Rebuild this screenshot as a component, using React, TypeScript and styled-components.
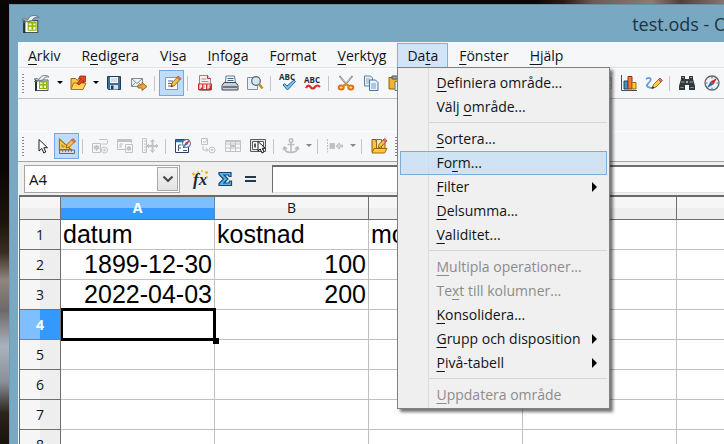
import React from "react";
import styled, { createGlobalStyle, css } from "styled-components";

const ui = '"Open Sans", "Noto Sans", sans-serif';

const GlobalStyle = createGlobalStyle`
  *, *::before, *::after { box-sizing: border-box; }
  body { margin: 0; font-family: ${ui}; font-size: 14px; color: #101418; }
  button, input { font: inherit; color: inherit; }
`;

const Desktop = styled.div`
  display: flex;
  height: 100vh;
  padding: 4px 0 0 9px;
  overflow: hidden;
  background:
    linear-gradient(to right, #0a0706 0 74%, #2a1c17 78%, #6b5c55 82%, #8b7b73 90%, #4d423d 94%, #84766e 100%) top / 100% 4px no-repeat,
    linear-gradient(to bottom, #080504 0 38%, #1c150c 50%, #3b2f25 57%, #8f857d 63%, #6d6a6a 70%, #a9b3bf 78%, #8a8f98 86%, #2a241c 93%, #17120c 100%);
`;

const Frame = styled.div`
  flex: 1;
  min-width: 0;
  display: flex;
  flex-direction: column;
  padding-left: 8px;
  background: #78a8c2;
  border-top: 1px solid #6692aa;
  border-left: 1px solid #6e9db6;
`;

const TitleBar = styled.header`
  display: flex;
  align-items: center;
  height: 37px;
  padding: 0 0 0 4px;
  overflow: hidden;
`;

const Title = styled.h1`
  margin: 0 -4px 0 auto;
  font-size: 18px;
  font-weight: 400;
  line-height: 24px;
  white-space: nowrap;
  color: #1f343f;
`;

const Client = styled.main`
  flex: 1;
  min-height: 0;
  display: flex;
  flex-direction: column;
  background: #f5f6f8;
`;

const MenuBar = styled.nav`
  display: flex;
  gap: 1px;
  height: 26px;
  padding-top: 1px;
  background: #f6f7f9;
  border-bottom: 1px solid #e2e3e5;
`;

const MenuHolder = styled.div`
  position: relative;
  display: flex;
`;

const MenuTitle = styled.button<{ $open?: boolean }>`
  display: block;
  height: 25px;
  padding: 0 9px;
  border: 1px solid transparent;
  background: none;
  line-height: 23px;
  white-space: nowrap;
  ${p => p.$open && css`background: #d2e5f8; border-color: #7fb0de;`}
`;

const Key = styled.u`
  text-decoration-thickness: 1px;
  text-underline-offset: 3px;
  text-decoration-skip-ink: none;
`;

const Popup = styled.div`
  position: absolute;
  z-index: 2;
  top: 24px;
  left: 0;
  min-width: 213px;
  padding: 3px 2px 1px;
  border: 1px solid #808080;
  background: linear-gradient(to right, #efefef 30px, #dcdcdc 30px 31px, #f0f0f0 31px);
  box-shadow: 3px 3px 3px rgba(0, 0, 0, 0.55);
`;

const PopupItem = styled.button<{ $active?: boolean }>`
  display: flex;
  align-items: center;
  justify-content: space-between;
  width: 100%;
  height: 24px;
  padding: 0 9px 0 35px;
  border: 1px solid transparent;
  background: none;
  line-height: 22px;
  text-align: left;
  white-space: nowrap;
  &:disabled { color: #8c8c8c; }
  ${p => p.$active && css`background: rgba(190, 219, 246, 0.65); border-color: #7fabdb;`}
`;

const PopupRule = styled.hr`
  height: 1px;
  margin: 3px 0 4px 29px;
  border: 0;
  background: #d5d5d5;
`;

const Submenu = styled.span`
  border: 5px solid transparent;
  border-left-color: #000;
  border-right-width: 0;
`;

const ToolBar = styled.div`
  display: flex;
  align-items: center;
  height: 31px;
  overflow: hidden;
  background: linear-gradient(#fdfdfe 0 1px, #f6f7f9 1px);
  border-bottom: 1px solid #bfc1c4;
`;

const FormBar = styled(ToolBar)`
  margin-top: 32px;
  border-color: #a3a3a3;
`;

const Grip = styled.span`
  flex: none;
  width: 2px;
  height: 19px;
  margin: 0 5px 0 4px;
  background: repeating-linear-gradient(#85878a 0 1px, transparent 1px 3px);
`;

const Tool = styled.button<{ $on?: boolean }>`
  flex: none;
  display: grid;
  place-items: center;
  width: 25px;
  height: 26px;
  padding: 0;
  border: 1px solid transparent;
  background: none;
  ${p => p.$on && css`background: #bfdcfa; border-color: #73a9e0;`}
`;

const More = styled.button<{ $off?: boolean }>`
  flex: none;
  display: grid;
  place-items: center;
  width: 11px;
  height: 26px;
  padding: 0 0 2px;
  border: 0;
  background: none;
  &::before {
    content: "";
    border: 3px solid transparent;
    border-top-color: ${p => (p.$off ? "#85878a" : "#000")};
    border-bottom-width: 0;
  }
`;

const Divider = styled.span`
  flex: none;
  width: 1px;
  height: 15px;
  margin: 0 4px 0 3px;
  background: #c3c5c8;
`;

const FormulaBar = styled.div`
  display: flex;
  align-items: center;
  height: 33px;
  padding-left: 6px;
  background: #f0f0f0;
`;

const NameBox = styled.div`
  flex: none;
  display: flex;
  width: 156px;
  height: 28px;
  margin-right: 7px;
  padding: 1px;
  border: 1px solid #a5a5a5;
  background: #fff;
`;

const NameInput = styled.input`
  flex: 1;
  min-width: 0;
  padding: 0 3px;
  border: 0;
  outline: 0;
  background: none;
  font-size: 15px;
  line-height: 20px;
`;

const NameButton = styled.button`
  display: grid;
  place-items: center;
  width: 21px;
  padding: 0;
  border: 1px solid #a9a9a9;
  background: linear-gradient(#f3f3f3, #e4e4e4);
`;

const FormulaInput = styled.input`
  flex: 1;
  min-width: 0;
  height: 28px;
  margin-left: 10px;
  border: 1px solid #e3e3e3;
  border-top: 2px solid #6d6d6d;
  border-left: 1px solid #6d6d6d;
  border-right: 0;
  outline: 0;
  background: #fff;
`;

const Sheet = styled.div`
  flex: 1;
  min-height: 0;
  margin-left: 1px;
  overflow: hidden;
  border-top: 2px solid #6a6a6a;
  border-left: 1px solid #6a6a6a;
  background: #fff;
`;

const Grid = styled.table`
  width: 811px;
  table-layout: fixed;
  border-collapse: separate;
  border-spacing: 0;
`;

const HeadCol = styled.col`width: 41px;`;
const DataCol = styled.col`width: 154px;`;

const ColHead = styled.th<{ $on?: boolean }>`
  height: 23px;
  padding: 0;
  border-right: 1px solid ${p => (p.$on ? "#5f87b5" : "#6f6f6f")};
  border-bottom: 1px solid #6f6f6f;
  background: linear-gradient(${p => (p.$on ? "#80bfff 0 50%, #3399ff 50%" : "#f6f6f6 0 50%, #eeeeee 50%")});
  color: ${p => (p.$on ? "#fff" : "#101418")};
  font-weight: ${p => (p.$on ? 700 : 400)};
  line-height: 20px;
`;

const RowHead = styled.th<{ $on?: boolean }>`
  height: 30px;
  padding: 1px 0 0;
  border-right: 1px solid #6f6f6f;
  border-bottom: 1px solid ${p => (p.$on ? "#5f87b5" : "#6f6f6f")};
  background: linear-gradient(to right, ${p => (p.$on ? "#80bfff 0 50%, #3399ff 50%" : "#f6f6f6 0 50%, #eeeeee 50%")});
  color: ${p => (p.$on ? "#fff" : "#101418")};
  font-weight: ${p => (p.$on ? 700 : 400)};
  line-height: 20px;
`;

const Cell = styled.td<{ $num?: boolean; $cursor?: boolean }>`
  position: relative;
  height: 30px;
  padding: 0 2px 2px;
  border-right: 1px solid #c0c0c0;
  border-bottom: 1px solid #c0c0c0;
  font: 25px/26px "Liberation Sans", Arial, sans-serif;
  text-align: ${p => (p.$num ? "right" : "left")};
  color: #000;
  ${p => p.$cursor && css`
    &::before {
      content: "";
      position: absolute;
      z-index: 1;
      inset: -2px -2px -2px 0;
      border: 3px solid #000;
      border-left-width: 2px;
    }
    &::after {
      content: "";
      position: absolute;
      z-index: 1;
      right: -5px;
      bottom: -5px;
      width: 6px;
      height: 6px;
      background: #000;
    }
  `}
`;

const Glyph = styled.svg`
  display: block;
  overflow: visible;
`;

const AbcText = styled.text`
  font: 700 8px "Open Sans", sans-serif;
`;

const FxText = styled.text`
  font: italic 700 17px "Liberation Serif", serif;
`;

const art: Record<string, React.ReactNode> = {
  calc: (
    <>
      <path d="M2 5h12v10.500H2z" fill="#fff" stroke="#4a5258" />
      <path d="M2 5v11" stroke="#24323c" strokeWidth="2" />
      <path d="M5 6h8v8H5z" fill="#8db600" />
      <path d="M6 7.500h2.500V9H6zM10 7.500h2V9h-2zM6 10.500h2.500v2.500H6zM10 10.500h2v2.500h-2z" fill="#f5fbc8" />
      <path d="M0 4c2-1 3.500-.5 5 .5C6 2 8 0 12 .5c2 .2 3 1.500 3 1.500-3-.5-5 .5-6 3-2 1-5 1-9-1z" fill="#e8edf0" stroke="#5d6b74" strokeWidth=".8" />
      <path d="M0 6.500c3-.5 6 0 8-1.500" fill="none" stroke="#70808a" />
    </>
  ),
  open: (
    <>
      <path d="M1 14V3.500h4.500L7 5h6v3" fill="#f9c54a" stroke="#a8620f" />
      <path d="M1 14.500 3.500 8H16l-3 6.500z" fill="#ffd557" stroke="#b46e12" />
      <path d="M7 8.500l4-4.500H8.500L10 1h5.500v5.500L13 8V5.500L9 10z" fill="#e8461e" stroke="#8e2a10" strokeWidth=".8" />
    </>
  ),
  save: (
    <>
      <path d="M1.500 1.500h13v13h-12l-1-1z" fill="#3e6f99" stroke="#1f3b55" />
      <path d="M4 2h8v6H4z" fill="#f3f7fa" />
      <path d="M5 4h6M5 6h6" stroke="#b4c3cf" />
      <path d="M4 10h8v4.500H4z" fill="#d6dde3" />
      <path d="M5 10.500h2.500v4H5z" fill="#223b50" />
    </>
  ),
  mail: (
    <>
      <path d="M.5 3.500h11v8H.5z" fill="#eef1f4" stroke="#7f8b96" />
      <path d="M.5 3.500 6 8.500l5.500-5M.5 11.500l4-4M11.500 11.500l-4-4" fill="none" stroke="#7f8b96" />
      <path d="M7 10h4V7.500l5 4-5 4V13H7z" fill="#f5a830" stroke="#a05c0b" strokeWidth=".9" />
    </>
  ),
  edit: (
    <>
      <path d="M1.500 2.500h12v12h-12z" fill="#fdfdfd" stroke="#8a98a5" />
      <path d="M4 6h5M4 8.500h4M4 11h3" stroke="#2f6ba5" />
      <path d="M7 12l1-4 6-6.500 2.500 2.500-6 6.500z" fill="#f7c23c" stroke="#7e5410" strokeWidth=".8" />
      <path d="M13 2.500 14.500 1 17 3.500 15.500 5z" fill="#ef6f7e" stroke="#a33c4b" strokeWidth=".6" />
      <path d="M7 12l.7-2 1.300 1.300z" fill="#222" />
    </>
  ),
  pdf: (
    <>
      <path d="M2.500.5h8l3 3v12h-11z" fill="#f7eeee" stroke="#96868a" />
      <path d="M10.500.5v3h3" fill="#ddd" stroke="#a33" />
      <path d="M4.500 4h5M4.500 6.500h7" stroke="#d08080" />
      <path d="M1 8.500h14v6.500H1z" fill="#d52b2b" />
      <path d="M3 14v-4h1.500v2H3M7 10v3.500h1.500v-3.500zM11 14v-4h2.500M11 12h2" fill="none" stroke="#fff" strokeWidth="1.100" />
    </>
  ),
  print: (
    <>
      <path d="M4 1h8.500l1 7h-10z" fill="#f5f9fc" stroke="#6b7a86" />
      <path d="M5.500 3.500h6M5.500 5.500h6" stroke="#3d6d9c" />
      <path d="M2 7.500h12l2 3v4.500H0v-4.500z" fill="#c8ced3" stroke="#3f4a53" />
      <path d="M1 11h14v2H1z" fill="#6c7780" />
    </>
  ),
  preview: (
    <>
      <path d="M.5 2.500h10v12H.5z" fill="#e9eff5" stroke="#7f91a3" />
      <circle cx="9" cy="6" r="4.300" fill="#d0e8f8" fillOpacity=".9" stroke="#56636e" strokeWidth="1.200" />
      <path d="M12 9l3.500 4.500" stroke="#c18a1c" strokeWidth="2.400" />
    </>
  ),
  abcCheck: (
    <>
      <AbcText x="-1" y="5" fill="#1e2d3a">ABC</AbcText>
      <path d="M3 10l1.500-1.500L7 11l7-6 1.500 1.500L7.500 15z" fill="#7cc1f0" stroke="#15588f" strokeWidth=".9" />
    </>
  ),
  abcWave: (
    <>
      <AbcText x="-1" y="8" fill="#1e2d3a">ABC</AbcText>
      <path d="M1 13c1.500-3 3-3 4.500-1s3 2 4.500 0 3-2 5 0" fill="none" stroke="#dd2a22" strokeWidth="2.200" />
    </>
  ),
  cut: (
    <>
      <path d="M1.500 1l8.500 10M14.500 1 6 11" stroke="#68747d" strokeWidth="1.600" />
      <path d="M2 1.500l7 8M14 1.500l-7 8" stroke="#dfe5e9" strokeWidth=".7" />
      <ellipse cx="3.200" cy="12.500" rx="2.500" ry="2" fill="#fbe3b9" stroke="#d9750f" strokeWidth="2" />
      <ellipse cx="12.800" cy="12.500" rx="2.500" ry="2" fill="#fbe3b9" stroke="#d9750f" strokeWidth="2" />
      <path d="M5 11 8 9l3 2" fill="none" stroke="#e08a20" strokeWidth="2.200" />
    </>
  ),
  copy: (
    <>
      <path d="M1.500 1h6l2 2v8h-8z" fill="#eaf3fb" stroke="#5c7d9c" />
      <path d="M3 4h4M3 6h4M3 8h3" stroke="#82a8cc" />
      <path d="M6.500 5h6l2.500 2.500v8H6.500z" fill="#eaf3fb" stroke="#4f7294" />
      <path d="M8 9h5M8 11h5M8 13h5" stroke="#6f9bc4" />
    </>
  ),
  paste: (
    <>
      <path d="M1 2.500h11.500V14H1z" fill="#f2b32a" stroke="#94610d" />
      <path d="M4 1h6v3H4z" fill="#9ba5ad" stroke="#4e575e" />
      <path d="M7 6.500h8.500v9H7z" fill="#eaf3fb" stroke="#5c7d9c" />
      <path d="M9 9h5M9 11.500h5" stroke="#82a8cc" />
    </>
  ),
  chart: (
    <>
      <path d="M.5 0v15.500H16" fill="none" stroke="#46525b" />
      <path d="M3 6h4v8H3z" fill="#4b8fc4" stroke="#16466e" />
      <path d="M7 1.500h4V14H7z" fill="#f47b30" stroke="#9c2e0b" />
      <path d="M11 7.500h4V14h-4z" fill="#ffce3f" stroke="#a06c0a" />
    </>
  ),
  draw: (
    <>
      <path d="M0 4c3-2 5.500-1 4.500 1.500S0 9 1 11s3 2 6.500 2" fill="none" stroke="#5b9be0" strokeWidth="1.700" />
      <path d="M6 13.500l1.500-4 6-6L16 6l-6 6z" fill="#fbcf45" stroke="#7e5410" strokeWidth=".8" />
      <path d="M12.500 4.500 14 3l2.500 2.500L15 7z" fill="#e8697c" stroke="#963848" strokeWidth=".7" />
      <path d="M6 13.500l.8-2.200 1.500 1.400z" fill="#222" />
    </>
  ),
  find: (
    <>
      <path d="M2 1h4v3h4V1h4v3l2 7v4h-6v-5H6v5H0v-4l2-7z" fill="#33383c" />
      <path d="M3 2.500h2M11 2.500h2M2 7h3.500M10.500 7H14M1.500 12.500h3M11.500 12.500h3" stroke="#929a9f" />
      <path d="M7 6h2v2H7z" fill="#aab1b6" />
    </>
  ),
  compass: (
    <>
      <circle cx="8" cy="8" r="7" fill="#eef3f7" stroke="#59646d" strokeWidth="1.300" />
      <path d="M8 2v1.500M8 12.500V14M2 8h1.500M12.500 8H14" stroke="#59646d" />
      <path d="M13 3 9.500 9.500l-3-3z" fill="#d7262b" />
      <path d="M3 13l3.500-6.500 3 3z" fill="#2a69b8" />
    </>
  ),
  pointer: <path d="M5 1.500v11.500l2.800-2.500 2 4.500 2-1-2-4.300h3.700z" fill="#fff" stroke="#1c2024" />,
  design: (
    <>
      <path d="M.5 1v10.500H12z" fill="#ffd24b" stroke="#b06d0e" strokeWidth="1.200" />
      <path d="M3 6.500V9h2.500z" fill="#bfdcfa" stroke="#b06d0e" strokeWidth=".8" />
      <path d="M.5 12h15v3.500H.5z" fill="#d6dade" stroke="#626b73" />
      <path d="M3.500 12v2M6.500 12v2M9.500 12v2M12.500 12v2" stroke="#626b73" strokeWidth=".8" />
      <path d="M7 10l1-3.500L13.500 1 16 3.500 10.500 9z" fill="#f7c23c" stroke="#7e5410" strokeWidth=".8" />
      <path d="M12.500 2 14 .5 16.500 3 15 4.500z" fill="#ef6f7e" stroke="#a33c4b" strokeWidth=".6" />
    </>
  ),
  control: (
    <g fill="none" stroke="#c0c2c5">
      <path d="M.5 5.500h8v9h-8zM7 1.500h7.500q1 0 1 1.500v2q0 1-1 1H9.500" />
      <path d="M4.500 7v6M2.500 8.500h4v2h-4z" strokeWidth="1.500" />
      <circle cx="12.500" cy="12" r="3" /><circle cx="12.500" cy="12" r=".8" />
    </g>
  ),
  form: (
    <g fill="none" stroke="#c0c2c5">
      <path d="M8 11.500H.5V1.500h14V5" /><path d="M.5 3h14" strokeWidth="2" />
      <path d="M3 10V6h3M3 8h2M8.500 6.500h7v8h-7z" /><path d="M12 8v5M10.500 9.500h3v2h-3z" strokeWidth="1.300" />
    </g>
  ),
  position: (
    <g fill="none" stroke="#c0c2c5">
      <path d="M.5.500h4v14h-4zM2 3h2M2 6h2M2 9h2M2 12h2" />
      <path d="M10.500 2v12M5 8h11" strokeWidth="2" /><path d="M8.500 4l2-2.500 2 2.500M8.500 12l2 2.500 2-2.500M7 6 5 8l2 2M14 6l2 2-2 2" />
    </g>
  ),
  navigator: (
    <>
      <path d="M.5 1.500h13v13H.5z" fill="#fff" stroke="#1f4468" />
      <path d="M1 3h12" stroke="#2f6fb1" strokeWidth="2.500" />
      <path d="M3.500 13V7h3M3.500 10H6M8 12.500h4M8 9.500h2" stroke="#3a5f85" fill="none" />
      <circle cx="11.500" cy="5.500" r="4" fill="#eef3f7" stroke="#555f68" />
      <path d="M14.500 2.500 12.500 6.500l-2-2z" fill="#d7262b" /><path d="M8.500 8.500l2-4 2 2z" fill="#2a69b8" />
    </>
  ),
  order: (
    <g fill="none" stroke="#c0c2c5">
      <path d="M1.500.5h6v6h-6zM3 3l1.500 2 3-4M3 8v4h4M6 10l2 2-2 2" />
      <circle cx="12" cy="12" r="3" /><circle cx="12" cy="12" r=".8" />
    </g>
  ),
  table: (
    <g fill="none" stroke="#c0c2c5">
      <path d="M.5 2.500h15v11H.5zM.5 6h15M.5 10h15M5.500 4v9.500M10.500 4v9.500" /><path d="M.5 3.500h15" strokeWidth="1.500" /><path d="M6 8h4" strokeWidth="2" />
    </g>
  ),
  autofocus: (
    <>
      <path d="M.5 1.500h15v12H.5z" fill="#e3e6e9" stroke="#545d64" />
      <path d="M2.500 3.500h11v8h-11z" fill="#fff" stroke="#545d64" />
      <path d="M5 5.500v4" stroke="#111" strokeWidth="1.400" />
      <path d="M8 3.500v9.500l2.200-2 1.800 4 2-1-1.800-3.800h3z" fill="#fff" stroke="#15191c" />
    </>
  ),
  anchor: (
    <g fill="none" stroke="#babdc0" strokeWidth="1.600">
      <circle cx="8" cy="2.500" r="1.700" /><path d="M8 4.500V14M4.500 6.500h7M1 9.500c.5 3 3 5 7 5s6.500-2 7-5M0 11.500l1.300-2.500L4 11M16 11.500 14.700 9 12 11" />
    </g>
  ),
  align: (
    <g fill="#c0c2c5" stroke="#c0c2c5">
      <path d="M.5 1v13.500" strokeDasharray="2 1" /><path d="M3 5.500h4.500v5H3z" /><path d="M9 8l3.500-3v2h3v2h-3v2z" fill="#d3d4d6" />
    </g>
  ),
  formOpen: (
    <>
      <path d="M1 14V1.500h4V4h9v9" fill="#f9c54a" stroke="#8f5a10" />
      <path d="M5.500 1.500h5V11h-5z" fill="#f4e6b4" stroke="#a8620f" />
      <path d="M1 15 3 10.500h13L13.500 15z" fill="#ffc93c" stroke="#a5650d" />
      <path d="M7 10l1-3.500 5-5.500 2.500 2-5.500 6z" fill="#f7c23c" stroke="#7e5410" strokeWidth=".8" />
      <path d="M12 2l1.500-1.500L16 2.500 14.700 4z" fill="#ef6f7e" stroke="#a33c4b" strokeWidth=".6" />
    </>
  ),
  fx: (
    <>
      <FxText x="1" y="14" fill="#1c2c38">fx</FxText>
      <path d="M0 3h3M1.500 1.500v3M5 1h2M9 0h2M13 1.500h3M14.500 0v3M14 6h2" stroke="#eeb91e" strokeWidth="1.500" />
    </>
  ),
  sum: <path d="M2 1.500h12v4h-2l-.5-1.500H7l4 4-4 4h5l.5-2H14.500v4.500H2v-2L6.500 8 2 3.500z" fill="#5fb2ea" stroke="#0f4a7c" strokeWidth="1.200" />,
  equals: <path d="M3 6h11M3 10h11" stroke="#24394b" strokeWidth="2" />,
  undo: <path d="M3 3v6h6M3 9c3-6 11-5 11 3" fill="none" stroke="#c78a12" strokeWidth="2" />,
  redo: <path d="M13 3v6H7M13 9C10 3 2 4 2 12" fill="none" stroke="#c78a12" strokeWidth="2" />,
  sort: <path d="M4 1v13M1 11l3 3.500L7 11M10 3h5M10 8h5M10 13h5" fill="none" stroke="#2f6ba5" strokeWidth="1.500" />,
};

const Icon = ({ name, size = 16 }: { name: string; size?: number }) => (
  <Glyph width={size} height={size} viewBox="0 0 16 16" aria-hidden="true">{art[name]}</Glyph>
);

type Part = { kind?: "tool" | "more" | "rule"; icon?: string; label?: string; on?: boolean; off?: boolean };
const t = (icon: string, label: string, on = false): Part => ({ kind: "tool", icon, label, on });
const more = (label: string, off = false): Part => ({ kind: "more", label, off });
const rule: Part = { kind: "rule" };

const standardTools: Part[] = [
  t("calc", "Nytt"), more("Fler nya"), t("open", "Öppna"), more("Senaste"), t("save", "Spara"), t("mail", "E-post"), rule,
  t("edit", "Redigera fil", true), rule, t("pdf", "Exportera PDF"), t("print", "Skriv ut"), t("preview", "Förhandsgranska"), rule,
  t("abcCheck", "Stavningskontroll"), t("abcWave", "Automatisk kontroll"), rule, t("cut", "Klipp ut"), t("copy", "Kopiera"),
  t("paste", "Klistra in"), t("draw", "Pensel"), rule, t("undo", "Ångra"), t("redo", "Gör om"), t("mail", "Hyperlänk"),
  t("sort", "Sortera stigande"), t("sort", "Sortera fallande"), t("table", "Tabell"), t("table", "Område"),
  t("chart", "Diagram"), t("draw", "Ritfunktioner"), rule, t("find", "Sök"), t("compass", "Navigator"),
];

const formTools: Part[] = [
  t("pointer", "Markera"), t("design", "Utkastläge", true), rule, t("control", "Kontrollfält"), t("form", "Formulär"),
  t("position", "Position"), rule, t("navigator", "Formulärnavigator"), t("order", "Aktiveringsordning"), t("table", "Tabellkontroll"),
  t("autofocus", "Autofokus"), rule, t("anchor", "Ankare", false), more("Byt ankare", true), rule, t("align", "Justering"),
  more("Fler justeringar", true), rule, t("formOpen", "Öppna i utkastläge"),
];

const Tools = ({ parts }: { parts: Part[] }) => (
  <>
    {parts.map((p, i) =>
      p.kind === "rule" ? <Divider key={i} /> :
      p.kind === "more" ? <More key={i} aria-label={p.label} $off={p.off} /> :
      <Tool key={i} aria-label={p.label} $on={p.on}><Icon name={p.icon!} /></Tool>
    )}
  </>
);

/* An ampersand marks the letter that follows it as the access key. */
const Label = ({ text }: { text: string }) => {
  const at = text.indexOf("&");
  return <span>{text.slice(0, at)}<Key>{text[at + 1]}</Key>{text.slice(at + 2)}</span>;
};

const menus = ["&Arkiv", "R&edigera", "Vi&sa", "&Infoga", "F&ormat", "&Verktyg", "Da&ta", "&Fönster", "&Hjälp"];

const dataMenu: ({ text: string; active?: boolean; off?: boolean; sub?: boolean } | null)[] = [
  { text: "&Definiera område..." }, { text: "Välj &område..." }, null,
  { text: "&Sortera..." }, { text: "Fo&rm...", active: true }, { text: "&Filter", sub: true }, { text: "&Delsumma..." }, { text: "&Validitet..." }, null,
  { text: "&Multipla operationer...", off: true }, { text: "Te&xt till kolumner...", off: true }, { text: "&Konsolidera..." },
  { text: "&Grupp och disposition", sub: true }, { text: "&Pivå-tabell", sub: true }, null,
  { text: "&Uppdatera område", off: true },
];

const columns = ["A", "B", "C", "D", "E"];
const rows = [
  ["datum", "kostnad", "moms"],
  ["1899-12-30", "100"],
  ["2022-04-03", "200"],
  [], [], [], [], [],
];

export default function App() {
  return (
    <>
      <GlobalStyle />
      <Desktop>
        <Frame>
          <TitleBar>
            <Icon name="calc" size={18} />
            <Title>test.ods - O</Title>
          </TitleBar>
          <Client>
            <MenuBar>
              {menus.map(m => (
                <MenuHolder key={m}>
                  <MenuTitle $open={m === "Da&ta"}><Label text={m} /></MenuTitle>
                  {m === "Da&ta" && (
                    <Popup role="menu">
                      {dataMenu.map((d, i) => d ? (
                        <PopupItem key={i} role="menuitem" disabled={d.off} $active={d.active}>
                          <Label text={d.text} />{d.sub && <Submenu />}
                        </PopupItem>
                      ) : <PopupRule key={i} />)}
                    </Popup>
                  )}
                </MenuHolder>
              ))}
            </MenuBar>
            <ToolBar><Grip /><Tools parts={standardTools} /></ToolBar>
            <FormBar><Grip /><Tools parts={formTools} /><Grip /></FormBar>
            <FormulaBar>
              <NameBox>
                <NameInput aria-label="Namnruta" defaultValue="A4" />
                <NameButton aria-label="Visa namn">
                  <Glyph width="12" height="8" viewBox="0 0 12 8"><path d="M1.500 1.500 6 6l4.500-4.500" fill="none" stroke="#4a4a4a" strokeWidth="2.200" /></Glyph>
                </NameButton>
              </NameBox>
              <Tool aria-label="Funktionsguide"><Icon name="fx" /></Tool>
              <Tool aria-label="Summa"><Icon name="sum" /></Tool>
              <Tool aria-label="Funktion"><Icon name="equals" /></Tool>
              <FormulaInput aria-label="Inmatningsrad" />
            </FormulaBar>
            <Sheet>
              <Grid>
                <colgroup><HeadCol />{columns.map(c => <DataCol key={c} />)}</colgroup>
                <thead>
                  <tr><ColHead />{columns.map(c => <ColHead key={c} scope="col" $on={c === "A"}>{c}</ColHead>)}</tr>
                </thead>
                <tbody>
                  {rows.map((r, i) => (
                    <tr key={i}>
                      <RowHead scope="row" $on={i === 3}>{i + 1}</RowHead>
                      {columns.map((c, j) => (
                        <Cell key={c} $num={i > 0} $cursor={i === 3 && j === 0}>{r[j]}</Cell>
                      ))}
                    </tr>
                  ))}
                </tbody>
              </Grid>
            </Sheet>
          </Client>
        </Frame>
      </Desktop>
    </>
  );
}
